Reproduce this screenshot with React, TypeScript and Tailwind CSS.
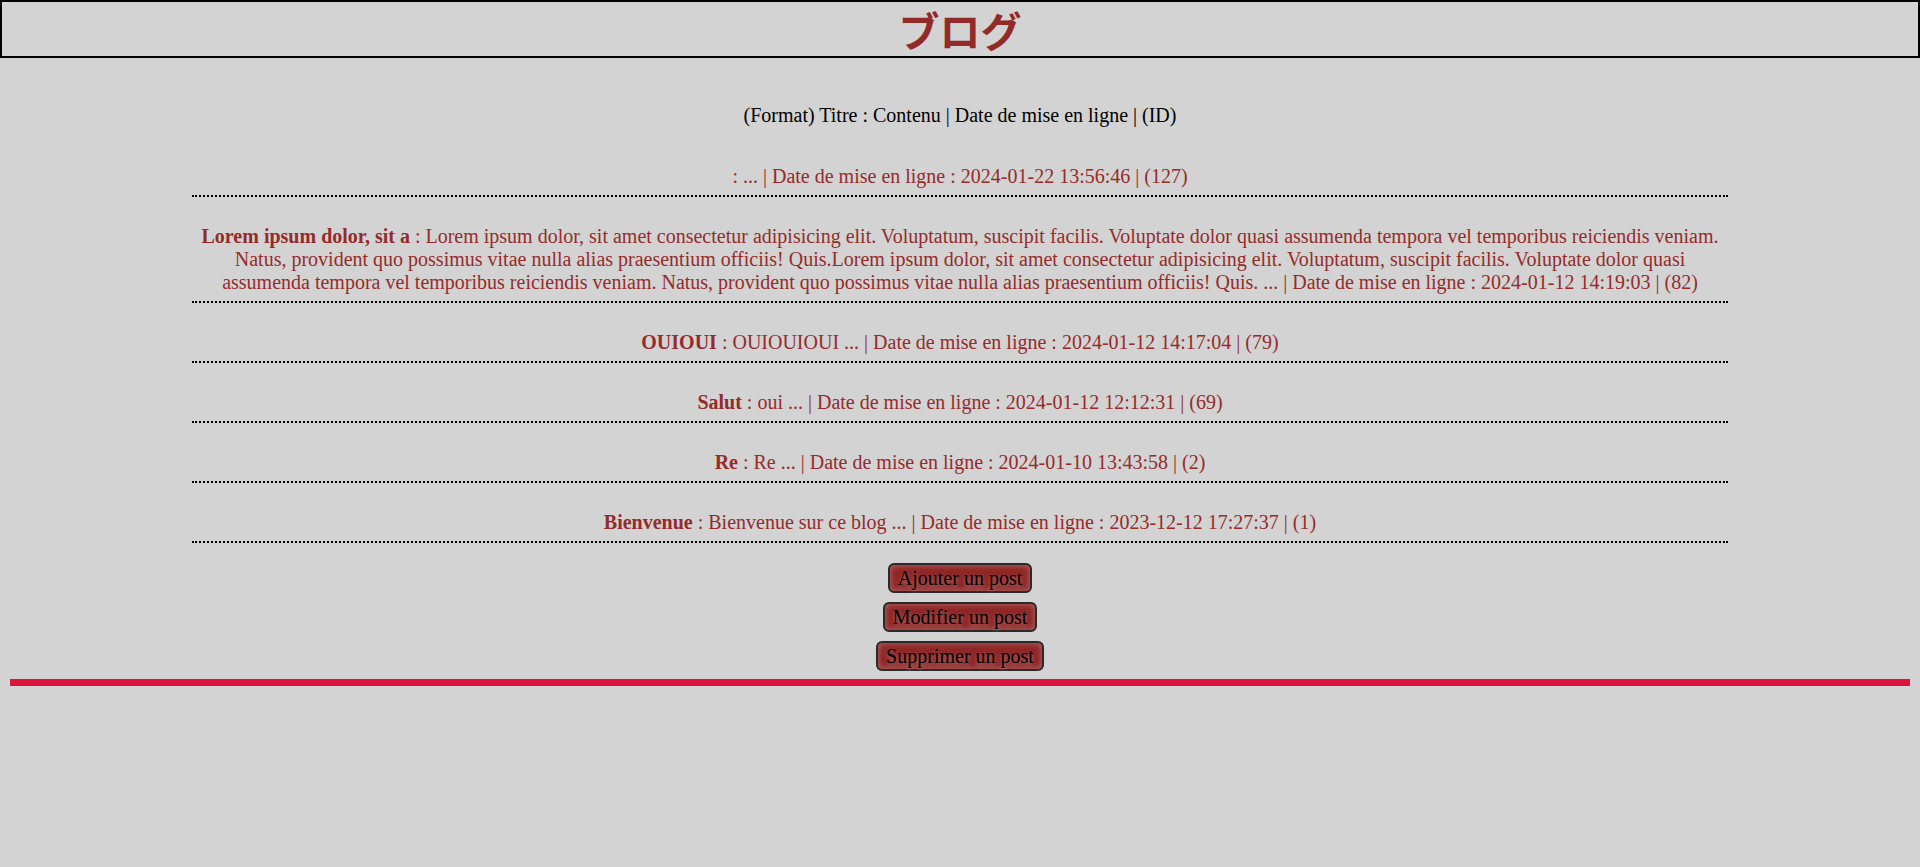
import React from 'react';

interface Post {
  id: number;
  title: string;
  content: string;
  date: string;
}

const POSTS: Post[] = [
  { id: 127, title: '', content: '...', date: '2024-01-22 13:56:46' },
  {
    id: 82,
    title: 'Lorem ipsum dolor, sit a',
    content:
      'Lorem ipsum dolor, sit amet consectetur adipisicing elit. Voluptatum, suscipit facilis. Voluptate dolor quasi assumenda tempora vel temporibus reiciendis veniam. Natus, provident quo possimus vitae nulla alias praesentium officiis! Quis.Lorem ipsum dolor, sit amet consectetur adipisicing elit. Voluptatum, suscipit facilis. Voluptate dolor quasi assumenda tempora vel temporibus reiciendis veniam. Natus, provident quo possimus vitae nulla alias praesentium officiis! Quis. ...',
    date: '2024-01-12 14:19:03',
  },
  { id: 79, title: 'OUIOUI', content: 'OUIOUIOUI ...', date: '2024-01-12 14:17:04' },
  { id: 69, title: 'Salut', content: 'oui ...', date: '2024-01-12 12:12:31' },
  { id: 2, title: 'Re', content: 'Re ...', date: '2024-01-10 13:43:58' },
  { id: 1, title: 'Bienvenue', content: 'Bienvenue sur ce blog ...', date: '2023-12-12 17:27:37' },
];

function PostButton({ label }: { label: string }) {
  return (
    <button className="h-[30px] px-[8px] rounded-[6px] border-2 border-[#2a2a2a] bg-[#8f2626] text-black text-[20px] leading-[22px] shadow-[inset_0_0_6px_rgba(255,255,255,0.35)] [text-shadow:0_2px_4px_rgba(255,255,255,0.35)]">
      {label}
    </button>
  );
}

export default function App() {
  return (
    <div className="min-h-[867px] bg-[#d3d3d3] font-['Liberation_Serif','Times_New_Roman',serif] text-[20px] leading-[23px]">
      <header className="h-[58px] border-2 border-black flex items-center justify-center">
        <h1 className="font-['Noto_Sans_CJK_JP','Noto_Sans',sans-serif] font-bold text-[41px] leading-[54px] text-[#932a2a]">
          ブログ
        </h1>
      </header>

      <p className="mt-[46px] text-center text-black">
        (Format) Titre : Contenu | Date de mise en ligne | (ID)
      </p>

      <ul className="w-[80%] mx-auto mt-[10px] text-[#952b2b]">
        {POSTS.map(post => (
          <li key={post.id} className="pt-[28px] pb-[7px] border-b-2 border-dotted border-black text-center">
            {post.title && <b>{post.title}</b>} : {post.content} | Date de mise en ligne : {post.date} | ({post.id})
          </li>
        ))}
      </ul>

      <div className="mt-[20px] flex flex-col items-center gap-[9px]">
        <PostButton label="Ajouter un post" />
        <PostButton label="Modifier un post" />
        <PostButton label="Supprimer un post" />
      </div>

      <div className="mx-[10px] mt-[8px] h-[7px] bg-[#dc143c]" />
    </div>
  );
}
